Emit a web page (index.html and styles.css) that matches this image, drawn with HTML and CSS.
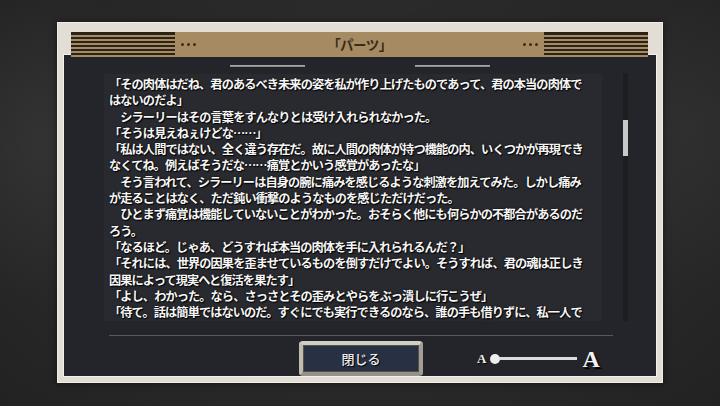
FILE: index.html
```html
<!DOCTYPE html>
<html lang="ja">
<head>
<meta charset="utf-8">
<title>パーツ</title>
<link rel="stylesheet" href="styles.css">
</head>
<body>
<div class="stage">
  <div class="frame">
    <div class="header">
      <div class="stripes"></div>
      <div class="dots"><i></i><i></i><i></i></div>
      <div class="title">「パーツ」</div>
      <div class="dots"><i></i><i></i><i></i></div>
      <div class="stripes"></div>
    </div>
    <div class="panel">
      <div class="tabs"><span class="tabline"></span><span class="tabline"></span></div>
      <div class="reader">
        <div class="textbox">
          <p>「その肉体はだね、君のあるべき未来の姿を私が作り上げたものであって、君の本当の肉体で<br>はないのだよ」</p>
          <p>　シラーリーはその言葉をすんなりとは受け入れられなかった。</p>
          <p>「そうは見えねぇけどな……」</p>
          <p>「私は人間ではない、全く違う存在だ。故に人間の肉体が持つ機能の内、いくつかが再現でき<br>なくてね。例えばそうだな……痛覚とかいう感覚があったな」</p>
          <p>　そう言われて、シラーリーは自身の腕に痛みを感じるような刺激を加えてみた。しかし痛み<br>が走ることはなく、ただ鈍い衝撃のようなものを感じただけだった。</p>
          <p>　ひとまず痛覚は機能していないことがわかった。おそらく他にも何らかの不都合があるのだ<br>ろう。</p>
          <p>「なるほど。じゃあ、どうすれば本当の肉体を手に入れられるんだ？」</p>
          <p>「それには、世界の因果を歪ませているものを倒すだけでよい。そうすれば、君の魂は正しき<br>因果によって現実へと復活を果たす」</p>
          <p>「よし、わかった。なら、さっさとその歪みとやらをぶっ潰しに行こうぜ」</p>
          <p>「待て。話は簡単ではないのだ。すぐにでも実行できるのなら、誰の手も借りずに、私一人で</p>
        </div>
        <div class="scrolltrack"><div class="thumb"></div></div>
      </div>
      <div class="separator"></div>
      <div class="footer">
        <button class="close">閉じる</button>
        <div class="slider">
          <span class="a-small">A</span>
          <span class="knob"></span>
          <span class="track"></span>
          <span class="a-big">A</span>
        </div>
      </div>
    </div>
  </div>
</div>
</body>
</html>
```
FILE: styles.css
```css
* { box-sizing: border-box; }
html, body { margin: 0; padding: 0; }
body {
  width: 720px;
  height: 406px;
  overflow: hidden;
  background:
    radial-gradient(ellipse 120px 160px at 40px 140px, rgba(70,70,70,0.35), rgba(0,0,0,0) 100%),
    radial-gradient(ellipse 140px 160px at 690px 130px, rgba(60,60,60,0.35), rgba(0,0,0,0) 100%),
    radial-gradient(ellipse at 50% 45%, #303030 0%, #2a2a2a 55%, #222222 100%);
  font-family: "Noto Sans CJK JP", "Noto Sans", sans-serif;
}
.stage {
  padding: 22px 57px 23px;
}
.frame {
  width: 606px;
  height: 361px;
  background: #e3ded5;
  padding: 10px 5px 5px;
  display: flex;
  flex-direction: column;
  box-shadow: 0 0 6px rgba(0,0,0,0.5);
  border: 1px solid #f1eee8;
}
.header {
  position: relative;
  z-index: 1;
  height: 25px;
  margin: -1px 9px -3px 8px;
  background: #a68b62;
  display: flex;
  align-items: center;
}
.stripes {
  width: 104px;
  height: 25px;
  flex: none;
  background: repeating-linear-gradient(to bottom, #2b2318 0px, #2b2318 2px, #a68b62 2px, #a68b62 4px);
  background-position: 0 1px;
}
.dots {
  display: flex;
  gap: 3px;
  margin: 0 6px;
  flex: none;
}
.dots i {
  width: 3px;
  height: 3px;
  border-radius: 50%;
  background: #3a2d1c;
}
.title {
  flex: 1;
  text-align: center;
  color: #3a2c1a;
  font-size: 13.5px;
  font-weight: 700;
  letter-spacing: -0.5px;
  line-height: 25px;
}
.panel {
  flex: 1;
  background: #24252a;
  border: 1px solid #f4f1ec;
  display: flex;
  flex-direction: column;
}
.tabs {
  display: flex;
  justify-content: center;
  gap: 110px;
  margin-top: 10px;
  height: 2px;
}
.tabline {
  width: 75px;
  height: 2px;
  background: linear-gradient(to bottom, #b4b4b4, #7e7e7e);
}
.reader {
  display: flex;
  margin-top: 6px;
  height: 248px;
}
.textbox {
  margin-left: 40px;
  width: 498px;
  height: 247px;
  margin-top: 1px;
  background: #292a2f;
  padding: 2px 0 0 5px;
  overflow: hidden;
  color: #f6f6f6;
  font-size: 12.2px;
  font-weight: 600;
  letter-spacing: -0.9px;
  line-height: 16.3px;
  text-shadow: 1px 1px 1px #000, 0 0 2px #000;
  white-space: nowrap;
}
.textbox p { margin: 0; }
.scrolltrack {
  margin-left: 21px;
  width: 5px;
  height: 248px;
  background: #1d1e21;
  padding-top: 47px;
}
.thumb {
  width: 5px;
  height: 36px;
  background: #c9c9c9;
}
.separator {
  margin: 14px 0 0 45px;
  width: 504px;
  height: 1px;
  background: #56585d;
}
.footer {
  display: flex;
  align-items: center;
  padding-left: 235px;
  margin-top: 5px;
}
.close {
  width: 124px;
  height: 35px;
  background: #283043;
  border: 4px solid #c0bbb1;
  border-top-color: #d3cec4;
  border-bottom-color: #96928a;
  border-right-color: #a29e95;
  border-radius: 4px;
  box-shadow: inset 0 0 0 1px #55524c;
  color: #ececec;
  font-family: "Noto Sans CJK JP", sans-serif;
  font-size: 13px;
  font-weight: 500;
  padding: 0;
  text-shadow: 1px 1px 1px #000;
}
.slider {
  display: flex;
  align-items: center;
  margin-left: 54px;
  color: #f2f2f2;
  font-family: "Liberation Serif", "DejaVu Serif", serif;
  font-weight: 700;
  text-shadow: 1px 1px 1px #000;
}
.a-small {
  font-size: 13px;
  margin-right: 4px;
}
.knob {
  width: 10px;
  height: 10px;
  border-radius: 50%;
  background: #eeeeee;
  flex: none;
}
.track {
  width: 78px;
  height: 3px;
  background: #dcdcdc;
  margin-left: -1px;
}
.a-big {
  font-size: 24px;
  margin-left: 5px;
  line-height: 22px;
  text-shadow: 2px 2px 1px #000;
}
```
